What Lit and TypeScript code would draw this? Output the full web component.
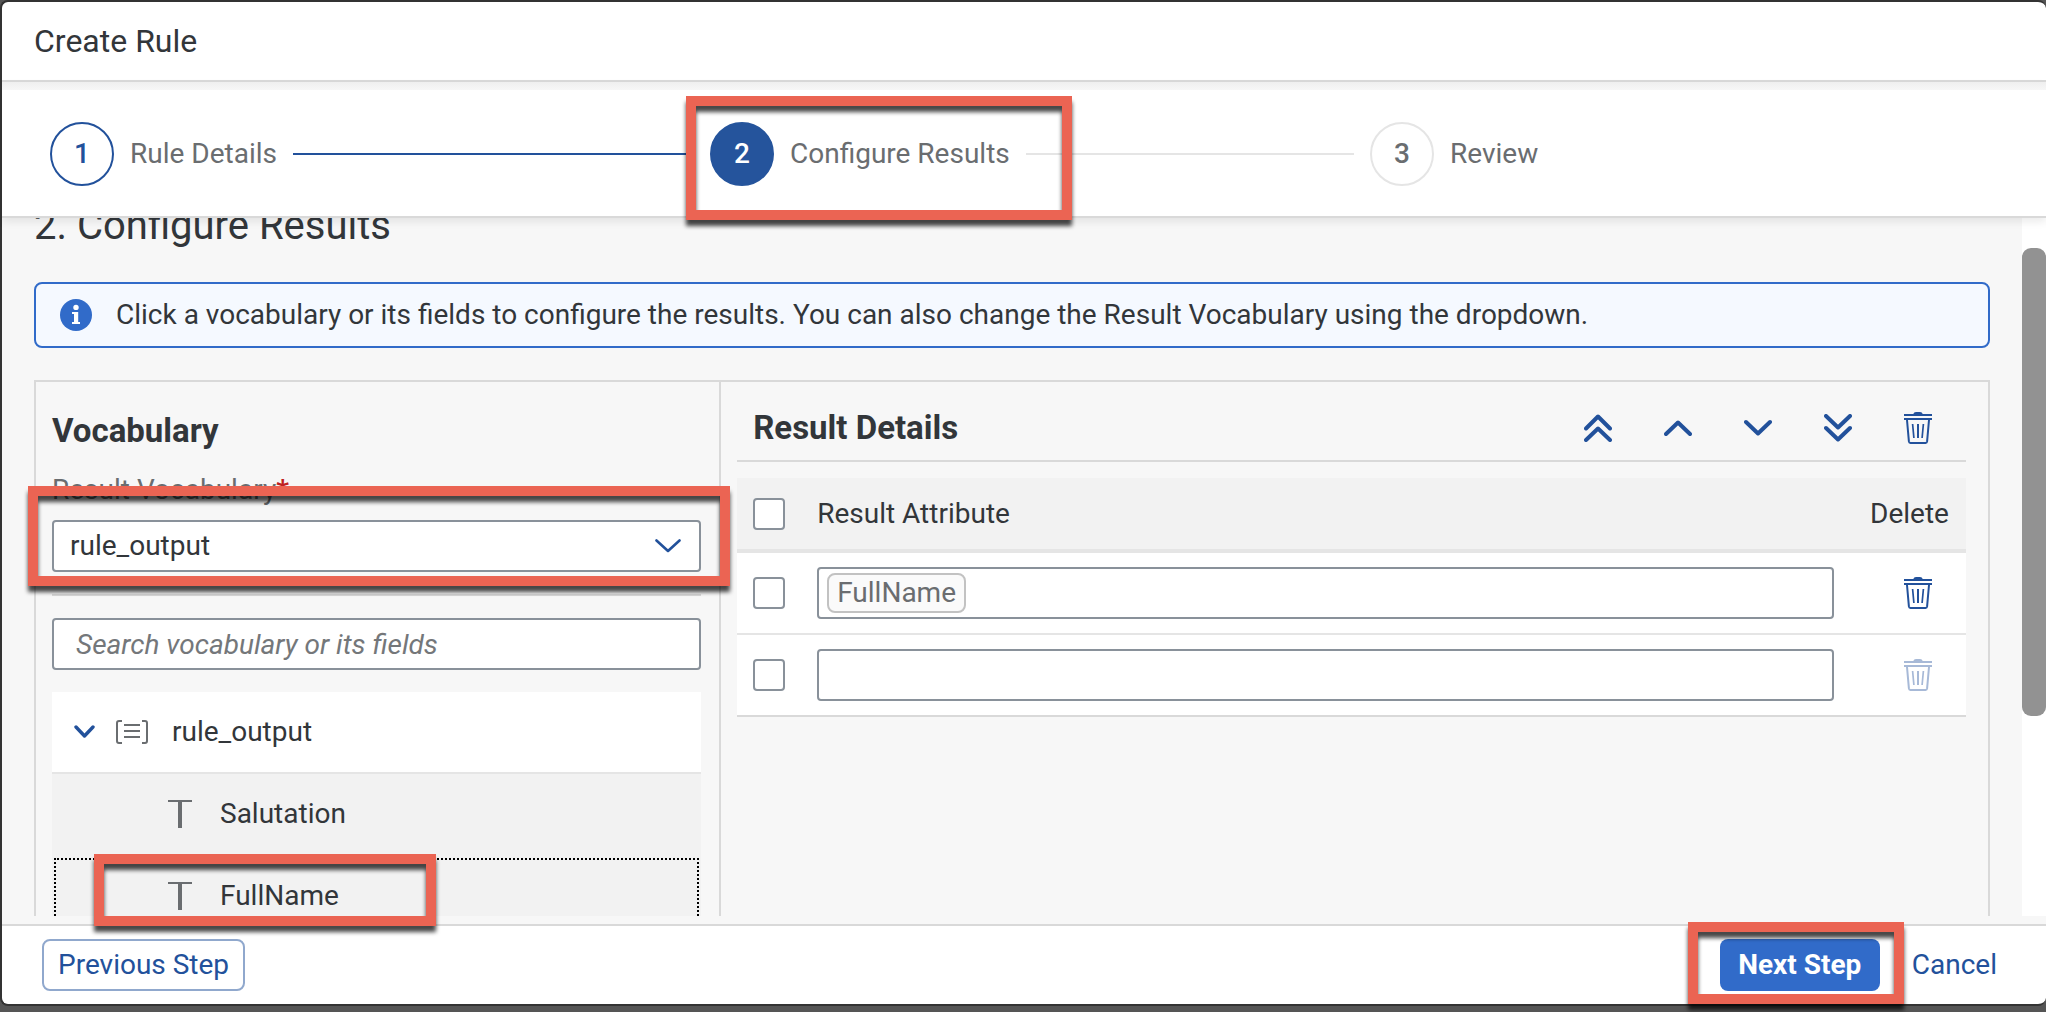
import { LitElement, html, css, svg, nothing } from "lit";
import { customElement, property, state } from "lit/decorators.js";
import { classMap } from "lit/directives/class-map.js";

type IconName = "top" | "up" | "down" | "bottom" | "trash" | "select" | "expand" | "structure" | "text";

const shapes: Record<IconName, { w: number; h: number; body: unknown }> = {
  top: { w: 28, h: 28, body: svg`<path d="M2 14.5 14 2.5 26 14.5M2 26 14 14.5 26 26" stroke-width="4" />` },
  up: { w: 28, h: 28, body: svg`<path d="M2 20 14 8.5 26 20" stroke-width="4" />` },
  down: { w: 28, h: 28, body: svg`<path d="M2 8 14 19.5 26 8" stroke-width="4" />` },
  bottom: { w: 28, h: 28, body: svg`<path d="M2 2 14 13.5 26 2M2 14 14 25.5 26 14" stroke-width="4" />` },
  trash: {
    w: 28,
    h: 32,
    body: svg`<path d="M9 2.4Q10 0 12 0H16Q18 0 19 2.4Z" fill="currentColor" stroke="none" />
      <path d="M0 3H28M0 7H28" stroke-width="2" stroke-linecap="butt" />
      <path d="M3 8 4.9 29.4Q5.1 31 6.4 31H21.6Q22.9 31 23.1 29.4L25 8" stroke-width="2" stroke-linecap="butt" />
      <path d="M8.6 12 9.9 26M19.4 12 18.1 26" stroke-width="1.7" stroke-linecap="butt" />
      <path d="M14 12V26" stroke-width="2" stroke-linecap="butt" />`,
  },
  select: { w: 26, h: 14, body: svg`<path d="M1.5 1.5 13 12 24.5 1.5" stroke-width="2.6" />` },
  expand: { w: 22, h: 14, body: svg`<path d="M2 2 10.5 11 19 2" stroke-width="3.4" />` },
  structure: {
    w: 32,
    h: 24,
    body: svg`<path d="M6 1H3Q1 1 1 3V21Q1 23 3 23H6M26 1H29Q31 1 31 3V21Q31 23 29 23H26M8 5H24M8 11H24M8 17H24" stroke-width="2" stroke-linecap="butt" />`,
  },
  text: { w: 24, h: 28, body: svg`<path d="M0 1H24" stroke-width="2" stroke-linecap="butt" /><path d="M12 1V28" stroke-width="4" stroke-linecap="butt" />` },
};

@customElement("rule-icon")
export class RuleIcon extends LitElement {
  @property() name: IconName = "up";
  static styles = css`
    :host { display: inline-flex; }
    svg { display: block; fill: none; stroke: currentColor; stroke-linecap: round; stroke-linejoin: round; }
  `;
  render() {
    const s = shapes[this.name];
    return html`<svg width=${s.w} height=${s.h} viewBox="0 0 ${s.w} ${s.h}" aria-hidden="true">${s.body}</svg>`;
  }
}

interface Row { token: string; }

@customElement("app-root")
export class AppRoot extends LitElement {
  @state() private rows: Row[] = [{ token: "FullName" }, { token: "" }];

  private steps = ["Rule Details", "Configure Results", "Review"];
  private tools: { icon: IconName; label: string }[] = [
    { icon: "top", label: "Move to top" },
    { icon: "up", label: "Move up" },
    { icon: "down", label: "Move down" },
    { icon: "bottom", label: "Move to bottom" },
    { icon: "trash", label: "Delete selected" },
  ];

  static styles = css`
    :host {
      display: block;
      height: 100vh;
      box-sizing: border-box;
      padding-bottom: 6px;
      position: relative;
      overflow: hidden;
      background: #555;
      color: #32363a;
      font: 28px/36px Roboto, "Liberation Sans", sans-serif;
    }
    * { box-sizing: border-box; }
    h1, h2, h3, p, ul, ol { margin: 0; padding: 0; }
    ul, ol { list-style: none; }
    button, input, select { font: inherit; color: inherit; margin: 0; }
    button { cursor: pointer; }

    .dialog {
      display: flex;
      flex-direction: column;
      height: 100%;
      background: #fff;
      border: 2px solid #333;
      border-right: 0;
      border-radius: 8px;
    }
    .head {
      padding: 19px 32px;
      border-bottom: 2px solid #d9d9d9;
    }
    .head h1 { font-size: 32px; line-height: 40px; font-weight: 400; }

    .progress {
      position: relative;
      z-index: 1;
      border-bottom: 2px solid #d9d9d9;
      box-shadow: 0 4px 8px rgba(0, 0, 0, 0.08);
      background: #fff;
    }
    .progress::before {
      content: "";
      display: block;
      height: 8px;
      background: linear-gradient(#efefef, #f7f7f7);
    }
    .steps {
      display: grid;
      grid-template-columns: repeat(3, 1fr);
      padding: 32px 16px 30px 48px;
    }
    .step {
      position: relative;
      display: flex;
      align-items: center;
      gap: 16px;
      padding-right: 16px;
      color: #6a6d70;
    }
    .num {
      display: flex;
      align-items: center;
      justify-content: center;
      width: 64px;
      height: 64px;
      border: 2px solid #e5e5e5;
      border-radius: 50%;
      font-weight: 500;
    }
    .done .num { border-color: #22519b; color: #22519b; }
    .current .num { border-color: #25549c; background: #25549c; color: #fff; }
    .line { flex: 1; height: 2px; background: #e5e5e5; }
    .done .line { background: #22519b; }

    .body { flex: 1; min-height: 0; display: flex; background: #f7f7f7; }
    .content { flex: 1; min-width: 0; overflow: hidden; padding: 0 32px; }
    .content h2 { margin-top: -16px; font-size: 40px; line-height: 48px; font-weight: 400; }
    .track { width: 24px; padding-top: 30px; background: #fff; }
    .thumb { height: 70%; border-radius: 9px; background: #929292; }

    .strip {
      display: flex;
      align-items: center;
      gap: 24px;
      margin: 32px 0;
      padding: 13px 24px;
      border: 2px solid #316bc9;
      border-radius: 8px;
      background: #f5f9ff;
    }
    .strip svg { flex: none; }

    .panel { display: flex; height: 720px; border: 2px solid #d9d9d9; }
    .vocab {
      flex: 0 0 35%;
      display: flex;
      flex-direction: column;
      gap: 22px;
      padding: 30px 18px 0 16px;
    }
    h3 { font-size: 33px; line-height: 38px; font-weight: 700; }
    .field { display: grid; gap: 12px; }
    .field label { color: #6a6d70; }
    .req { color: #c02020; font-weight: 700; }
    .pick { position: relative; display: grid; align-items: center; }
    .pick select, .pick rule-icon { grid-area: 1 / 1; }
    .pick rule-icon { justify-self: end; margin-right: 20px; color: #22519b; pointer-events: none; }
    .box {
      width: 100%;
      height: 52px;
      padding: 0 22px;
      border: 2px solid #89919a;
      border-radius: 4px;
      background: #fff;
      outline: none;
    }
    select.box { appearance: none; padding: 0 16px; }
    .box::placeholder { color: #74777a; font-style: italic; opacity: 1; }
    hr { width: 100%; height: 2px; margin: 0; border: 0; background: #d9d9d9; }

    .node {
      display: flex;
      align-items: center;
      height: 82px;
      border-bottom: 2px solid #f2f2f2;
      background: #f2f2f2;
    }
    .node rule-icon { color: #6a6d70; }
    .parent { gap: 20px; padding-left: 22px; background: #fff; border-color: #e5e5e5; }
    .parent .kind { margin-right: 4px; }
    .toggle { display: flex; padding: 0; border: 0; background: none; }
    .toggle rule-icon { color: #22519b; }
    .leaf { gap: 28px; padding-left: 116px; }
    .focused { outline: 2px dotted #000; outline-offset: -4px; }

    .details { flex: 1; min-width: 0; padding: 14px 22px 0 16px; border-left: 2px solid #d9d9d9; }
    .bar {
      display: flex;
      align-items: center;
      height: 66px;
      margin-bottom: 16px;
      padding: 0 8px 0 16px;
      border-bottom: 2px solid #d9d9d9;
    }
    .bar h3 { flex: 1; }
    .tool {
      display: flex;
      align-items: center;
      justify-content: center;
      width: 80px;
      height: 52px;
      padding: 0;
      border: 0;
      background: none;
      color: #22519b;
    }
    .tool:disabled { color: #a7b9d7; cursor: default; }

    table { width: 100%; table-layout: fixed; border-spacing: 0; border-bottom: 2px solid #d9d9d9; }
    th, td { padding: 0; text-align: left; font-weight: 400; }
    th { height: 75px; background: #f2f2f2; border-bottom: 4px solid #e5e5e5; }
    td { height: 82px; background: #fff; border-bottom: 2px solid #e5e5e5; }
    tr:last-child td { height: 80px; border-bottom: 0; }
    .c-check { width: 80px; padding-left: 16px; }
    .c-attr { padding-right: 36px; }
    .c-del { width: 96px; }
    .c-del .tool { width: 96px; }
    input[type="checkbox"] {
      appearance: none;
      display: block;
      width: 32px;
      height: 32px;
      border: 2px solid #89919a;
      border-radius: 4px;
      background: #fff;
    }
    .multi { display: flex; align-items: center; padding: 0 8px; }
    .token {
      height: 40px;
      padding: 0 8px;
      border: 2px solid #c2c2c2;
      border-radius: 8px;
      background: #fafafa;
      color: #6a6d70;
    }
    .multi input { flex: 1; min-width: 0; border: 0; outline: 0; background: none; }

    .edge { border-top: 8px solid #f7f7f7; }
    .foot {
      display: flex;
      align-items: center;
      justify-content: space-between;
      padding: 13px 33px 13px 40px;
      border-top: 2px solid #d9d9d9;
    }
    .btn {
      height: 52px;
      padding: 0 14px;
      border: 2px solid transparent;
      border-radius: 8px;
      background: none;
      color: #22519b;
    }
    .prev { border-color: #90a8cd; background: #fff; }
    .next { min-width: 160px; background: #316bc9; color: #fff; font-weight: 700; }
    .group { display: flex; gap: 16px; }
    .anchor { position: relative; display: flex; }

    .frame {
      position: absolute;
      z-index: 2;
      border: 10px solid #eb6453;
      filter: drop-shadow(0 6px 2px rgba(0, 0, 0, 0.72));
      pointer-events: none;
    }
    .frame-step { left: -24px; top: -26px; width: 386px; height: 124px; }
    .frame-pick { left: -24px; right: -29px; top: -34px; bottom: -14px; }
    .frame-node { left: 94px; bottom: 86px; width: 342px; height: 72px; }
    .frame-next { left: -32px; right: -24px; top: -17px; bottom: -13px; }
  `;

  private clear(i: number) {
    this.rows = this.rows.map((r, n) => (n === i ? { token: "" } : r));
  }

  render() {
    return html`
      <div class="dialog" role="dialog" aria-labelledby="dlg">
        <header class="head"><h1 id="dlg">Create Rule</h1></header>
        <nav class="progress" aria-label="Steps">
          <ol class="steps">
            ${this.steps.map(
              (s, i) => html`<li class=${classMap({ step: true, done: i === 0, current: i === 1 })}>
                <span class="num">${i + 1}</span><span>${s}</span>
                ${i < 2 ? html`<span class="line"></span>` : nothing}
                ${i === 1 ? html`<div class="frame frame-step"></div>` : nothing}
              </li>`
            )}
          </ol>
        </nav>
        <main class="body">
          <div class="content">
            <h2>2. Configure Results</h2>
            <div class="strip" role="note">
              <svg width="32" height="32" viewBox="0 0 32 32" aria-hidden="true">
                <circle cx="16" cy="16" r="16" fill="#316bc9" />
                <circle cx="16" cy="8.4" r="2.7" fill="#fff" />
                <path d="M12 13H18.2V23H20V25H12V23H14V15H12Z" fill="#fff" />
              </svg>
              <p>Click a vocabulary or its fields to configure the results. You can also change the Result Vocabulary using the dropdown.</p>
            </div>
            <div class="panel">
              <section class="vocab">
                <h3>Vocabulary</h3>
                <div class="field">
                  <label for="voc">Result Vocabulary<span class="req">*</span></label>
                  <div class="pick">
                    <select id="voc" class="box"><option>rule_output</option></select>
                    <rule-icon name="select"></rule-icon>
                    <div class="frame frame-pick"></div>
                  </div>
                </div>
                <hr />
                <input class="box" type="text" aria-label="Search vocabulary or its fields" placeholder="Search vocabulary or its fields" />
                <ul role="tree">
                  <li class="node parent" role="treeitem" aria-expanded="true">
                    <button class="toggle" aria-label="Collapse"><rule-icon name="expand"></rule-icon></button>
                    <rule-icon class="kind" name="structure"></rule-icon><span>rule_output</span>
                  </li>
                  <li class="node leaf" role="treeitem"><rule-icon name="text"></rule-icon><span>Salutation</span></li>
                  <li class="node leaf focused" role="treeitem"><rule-icon name="text"></rule-icon><span>FullName</span></li>
                </ul>
              </section>
              <section class="details">
                <div class="bar">
                  <h3>Result Details</h3>
                  ${this.tools.map((t) => html`<button class="tool" aria-label=${t.label}><rule-icon name=${t.icon}></rule-icon></button>`)}
                </div>
                <table>
                  <thead>
                    <tr>
                      <th class="c-check"><input type="checkbox" aria-label="Select all" /></th>
                      <th class="c-attr">Result Attribute</th>
                      <th class="c-del">Delete</th>
                    </tr>
                  </thead>
                  <tbody>
                    ${this.rows.map(
                      (r, i) => html`<tr>
                        <td class="c-check"><input type="checkbox" aria-label="Select row ${i + 1}" /></td>
                        <td class="c-attr">
                          <div class="box multi">
                            ${r.token ? html`<span class="token">${r.token}</span>` : nothing}
                            <input type="text" aria-label="Result attribute ${i + 1}" />
                          </div>
                        </td>
                        <td class="c-del">
                          <button class="tool" aria-label="Delete row ${i + 1}" ?disabled=${!r.token} @click=${() => this.clear(i)}>
                            <rule-icon name="trash"></rule-icon>
                          </button>
                        </td>
                      </tr>`
                    )}
                  </tbody>
                </table>
              </section>
            </div>
          </div>
          <div class="track"><div class="thumb"></div></div>
        </main>
        <div class="edge">
          <footer class="foot">
            <button class="btn prev">Previous Step</button>
            <div class="group">
              <div class="anchor">
                <button class="btn next">Next Step</button>
                <div class="frame frame-next"></div>
              </div>
              <button class="btn">Cancel</button>
            </div>
          </footer>
        </div>
      </div>
      <div class="frame frame-node"></div>
    `;
  }
}
